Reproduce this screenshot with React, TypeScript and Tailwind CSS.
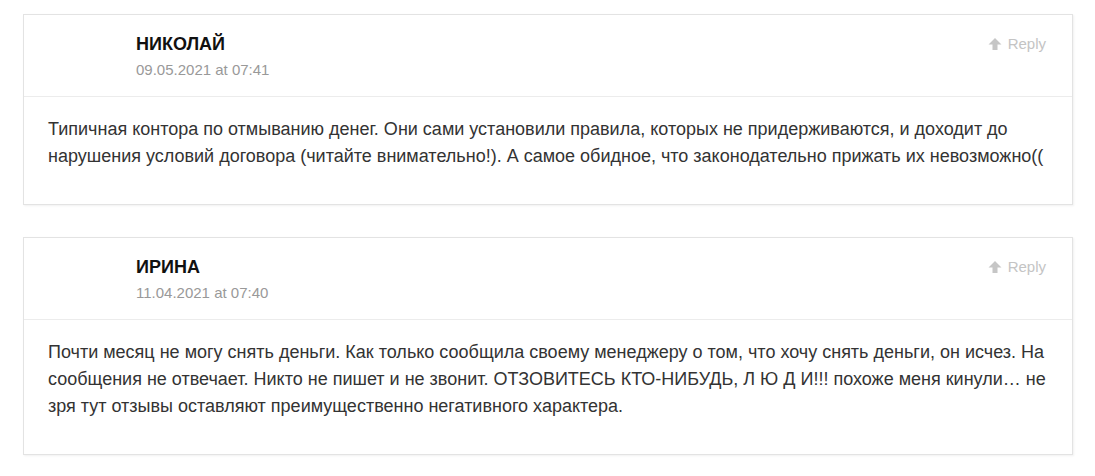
import React from "react";

type C = { name: string; date: string; text: string };

const comments: C[] = [
  {
    name: "НИКОЛАЙ",
    date: "09.05.2021 at 07:41",
    text:
      "Типичная контора по отмыванию денег. Они сами установили правила, которых не придерживаются, и доходит до нарушения условий договора (читайте внимательно!). А самое обидное, что законодательно прижать их невозможно((",
  },
  {
    name: "ИРИНА",
    date: "11.04.2021 at 07:40",
    text:
      "Почти месяц не могу снять деньги. Как только сообщила своему менеджеру о том, что хочу снять деньги, он исчез. На сообщения не отвечает. Никто не пишет и не звонит. ОТЗОВИТЕСЬ КТО-НИБУДЬ, Л Ю Д И!!! похоже меня кинули… не зря тут отзывы оставляют преимущественно негативного характера.",
  },
];

function ArrowUp() {
  return (
    <svg width="14" height="14" viewBox="0 0 14 14" className="mr-[6px]">
      <path d="M7 1 L13.5 7.5 L9.5 7.5 L9.5 13 L4.5 13 L4.5 7.5 L0.5 7.5 Z" fill="#c6c6c6" />
    </svg>
  );
}

export default function App() {
  return (
    <div
      className="bg-white w-[1095px] h-[476px] overflow-hidden pl-[23px] pr-[22px] pt-[14px] flex flex-col gap-[32px]"
      style={{ fontFamily: '"Liberation Sans", Arial, sans-serif' }}
    >
      {comments.map((c) => (
        <div
          key={c.name}
          className="border border-[#e3e3e3] bg-white shadow-[1px_1px_2px_rgba(0,0,0,0.06)]"
        >
          <div className="flex justify-between border-b border-[#ececec] pl-[112px] pr-[26px] pt-[17px] pb-[16px]">
            <div className="flex flex-col">
              <div className="text-[18px] leading-[24px] font-bold text-[#111]">{c.name}</div>
              <div className="mt-[4px] text-[15px] leading-[20px] text-[#999]">{c.date}</div>
            </div>
            <div className="flex items-center h-[24px] text-[15px] text-[#c4c4c4]">
              <ArrowUp />
              Reply
            </div>
          </div>
          <div className="pl-[24px] pr-[24px] pt-[19px] pb-[34px] text-[18px] leading-[27px] text-[#333]">
            {c.text}
          </div>
        </div>
      ))}
    </div>
  );
}
